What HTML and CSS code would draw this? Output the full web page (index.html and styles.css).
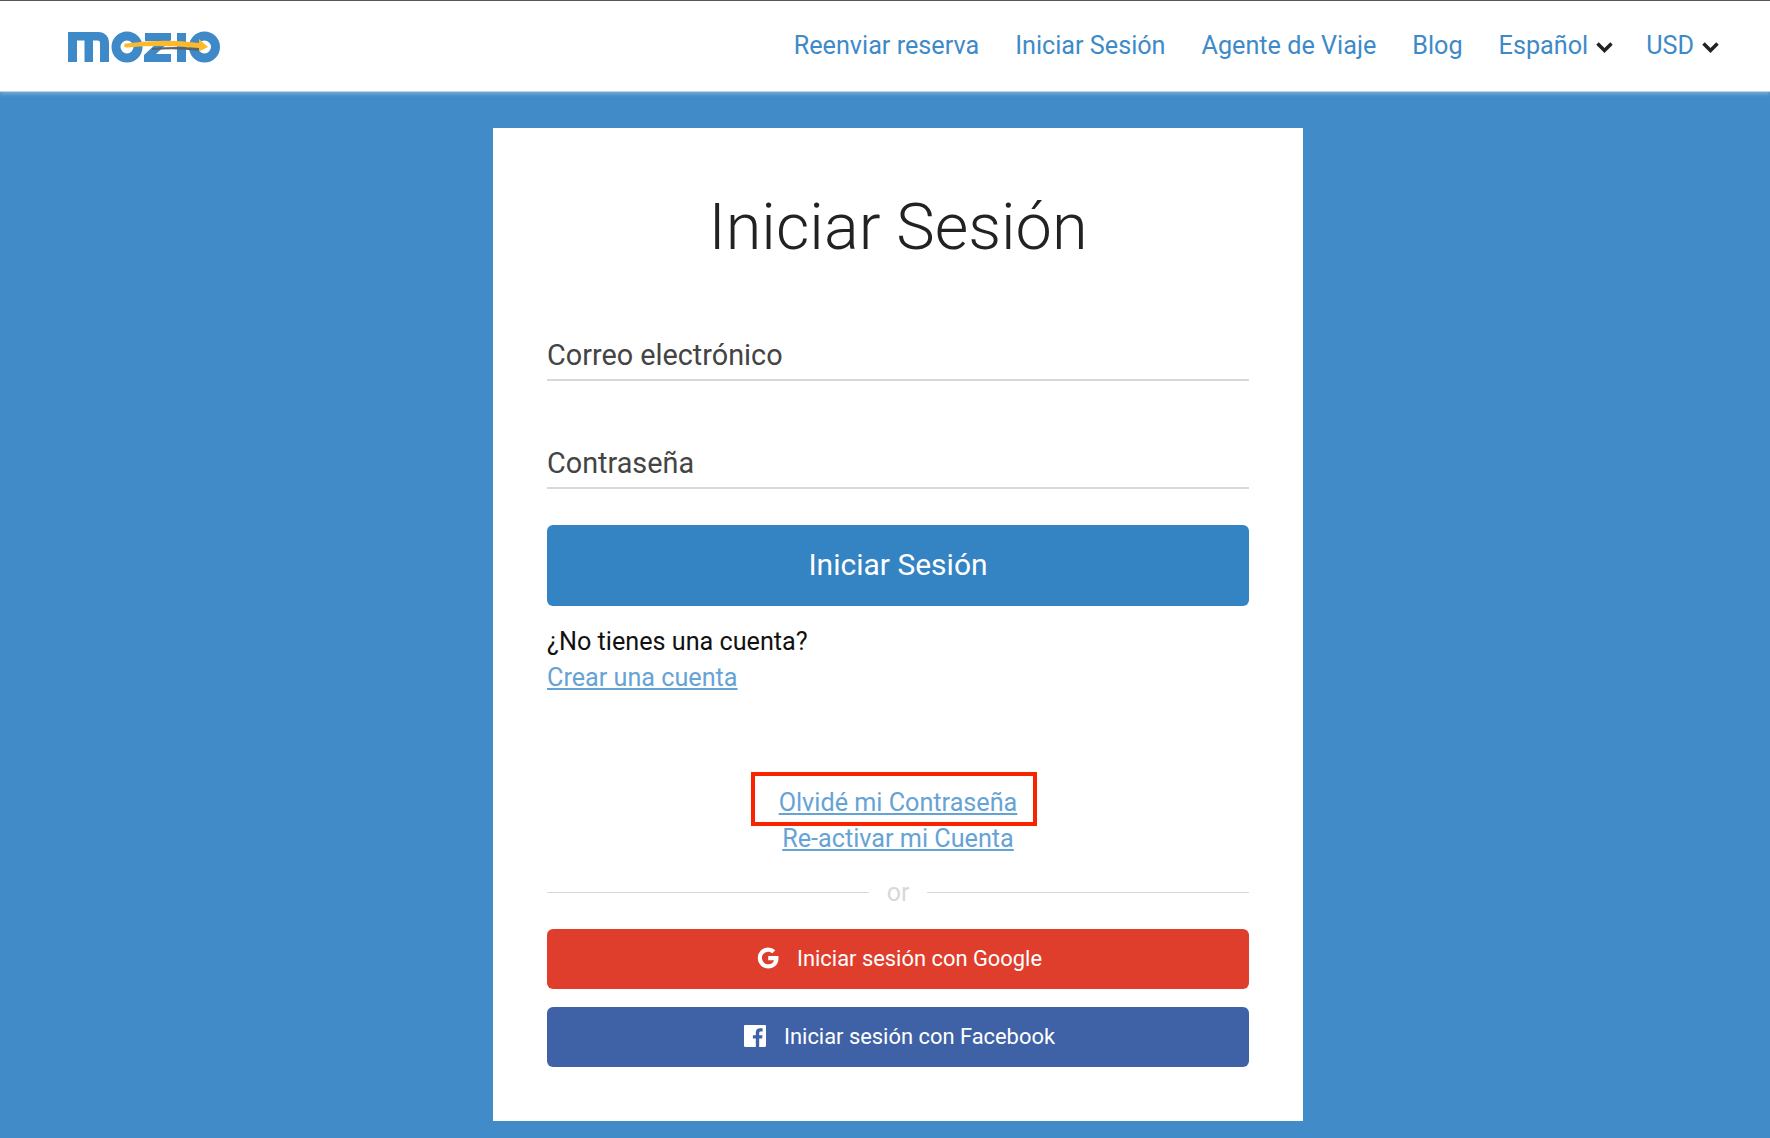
FILE: index.html
```html
<!DOCTYPE html>
<html lang="es">
<head>
<meta charset="utf-8">
<title>Iniciar Sesión</title>
<link rel="stylesheet" href="styles.css">
</head>
<body>
<header class="topbar">
  <a class="logo" href="#" aria-label="Mozio">
    <svg width="152" height="32" viewBox="0 0 152 32">
      <path class="logo-blue" d="M0 1h31a10 10 0 0 1 10 10v20h-9V12a2.500 2.500 0 0 0-2.500-2.500H25V31h-8.500V9.500H9V31H0z"/>
      <circle class="logo-ring" cx="59" cy="16" r="11"/>
      <path class="logo-blue" d="M77 2h26v7L88 23h15v8H76v-7L91 10H77z"/>
      <rect class="logo-blue" x="109" y="2" width="9" height="29"/>
      <circle class="logo-ring" cx="136.500" cy="16" r="11"/>
      <path class="logo-shadow" d="M84 17q26-2 50 0l-3 3q-22-3-47-1z"/>
      <path class="logo-arrow" d="M58 12.500q36-5 73-.5V8l9 8-9 4.500V17q-36-3.500-72-.5a2.500 2.500 0 0 1-3-2.200 2.200 2.200 0 0 1 2-1.800z"/>
    </svg>
  </a>
  <nav class="nav">
    <a href="#">Reenviar reserva</a>
    <a href="#">Iniciar Sesión</a>
    <a href="#">Agente de Viaje</a>
    <a href="#">Blog</a>
    <a href="#" class="drop">Español<svg class="chev" width="17" height="12" viewBox="0 0 17 12"><path d="M1.500 2.500l7 7 7-7"/></svg></a>
    <a href="#" class="drop currency">USD<svg class="chev" width="17" height="12" viewBox="0 0 17 12"><path d="M1.500 2.500l7 7 7-7"/></svg></a>
  </nav>
</header>
<main class="stage">
  <section class="card">
    <h1 class="title">Iniciar Sesión</h1>
    <div class="field first">Correo electrónico</div>
    <div class="field">Contraseña</div>
    <button class="submit" type="button">Iniciar Sesión</button>
    <p class="signup">¿No tienes una cuenta?<br><a href="#">Crear una cuenta</a></p>
    <div class="recover">
      <div class="forgot"><a href="#">Olvidé mi Contraseña</a><span class="highlight"></span></div>
      <a href="#">Re-activar mi Cuenta</a>
    </div>
    <div class="divider"><span>or</span></div>
    <button class="social google" type="button">
      <svg width="22" height="22" viewBox="0 0 22 22"><path d="M11.200 9v4.200h5.800c-.5 2.500-2.700 4.100-5.800 4.100a6.300 6.300 0 0 1 0-12.600c1.600 0 3 .6 4.100 1.500l3-3A10.600 10.600 0 0 0 11.200.5a10.500 10.500 0 0 0 0 21c6 0 10.300-4.300 10.300-10.300 0-.8-.1-1.500-.2-2.200z"/></svg>
      Iniciar sesión con Google
    </button>
    <button class="social facebook" type="button">
      <svg width="22" height="22" viewBox="0 0 22 22"><path d="M1.200 0h19.600c.7 0 1.200.5 1.200 1.200v19.600c0 .7-.5 1.200-1.200 1.200h-5.600v-8.500h2.900l.4-3.300h-3.300V8c0-1 .3-1.600 1.700-1.600h1.700v-3c-.3 0-1.300-.1-2.500-.1-2.500 0-4.300 1.500-4.300 4.400v2.500H8.900v3.300h2.900V22H1.200C.5 22 0 21.500 0 20.800V1.200C0 .5.500 0 1.200 0z"/></svg>
      Iniciar sesión con Facebook
    </button>
  </section>
</main>
</body>
</html>
```
FILE: styles.css
```css
* { box-sizing: border-box; }
html, body { margin: 0; height: 100%; }
body {
  font-family: Roboto, "Liberation Sans", sans-serif;
  background: #408bc8;
  height: 1138px;
  overflow: hidden;
}
a { color: inherit; }
.topbar {
  height: 92px;
  background: #fff;
  border-top: 1px solid #555;
  border-bottom: 1px solid #c6d2da;
  display: flex;
  align-items: center;
  justify-content: space-between;
  padding: 0 51px 0 68px;
  box-shadow: 0 2px 4px rgba(255,255,255,.3);
}
.logo { display: block; height: 32px; margin-top: 1px; }
.logo-blue { fill: #3e8ac9; }
.logo-ring { fill: none; stroke: #3e8ac9; stroke-width: 9; }
.logo-arrow { fill: #fdb92a; }
.logo-shadow { fill: #59636b; }
.nav { display: flex; gap: 36px; font-size: 25.200px; line-height: 30px; color: #3e8ac8; }
.nav a { text-decoration: none; }
.drop { display: flex; align-items: center; gap: 8px; }
.currency { margin-left: -3px; }
.chev { fill: none; stroke: #222; stroke-width: 3.500; margin-top: 2px; }
.stage { display: flex; justify-content: center; padding: 36px 0 0 26px; }
.card {
  width: 810px;
  height: 993px;
  background: #fff;
  padding: 0 54px;
  display: flex;
  flex-direction: column;
}
.title {
  margin: 59px 0 1px;
  font-size: 64.800px;
  line-height: 80px;
  font-weight: 300;
  text-align: center;
  color: #222;
}
.field {
  height: 46px;
  border-bottom: 2px solid #d9d9d9;
  font-size: 28.800px;
  line-height: 40px;
  color: #444;
  margin-top: 62px;
}
.field.first { margin-top: 67px; }
.submit {
  margin-top: 36px;
  height: 81px;
  padding-bottom: 3px;
  border: 0;
  border-radius: 6px;
  background: #3483c3;
  color: #fff;
  font: 400 30px Roboto, sans-serif;
}
.signup {
  margin: 18px 0 0;
  font-size: 25.200px;
  line-height: 36px;
  color: #111;
}
.signup a, .recover a { color: #66a3d5; }
.recover {
  margin-top: 89px;
  text-align: center;
  font-size: 25.200px;
  line-height: 36px;
}
.forgot { position: relative; }
.highlight {
  position: absolute;
  left: 204px;
  top: -13px;
  width: 286px;
  height: 54px;
  border: 4px solid #f82400;
}
.divider {
  margin-top: 19px;
  height: 32px;
  display: flex;
  align-items: center;
  gap: 18px;
  color: #d8d8d8;
  font-size: 25px;
}
.divider::before, .divider::after {
  content: "";
  flex: 1;
  border-top: 1px solid #d8d8d8;
}
.social {
  height: 60px;
  border: 0;
  border-radius: 6px;
  padding: 0 0 2px 3px;
  color: #fff;
  font: 400 21.900px Roboto, sans-serif;
  display: flex;
  align-items: center;
  justify-content: center;
  gap: 18px;
}
.social svg { fill: #fff; }
.google { background: #df3e2c; margin-top: 21px; }
.facebook { background: #3f62a7; margin-top: 18px; }
```
